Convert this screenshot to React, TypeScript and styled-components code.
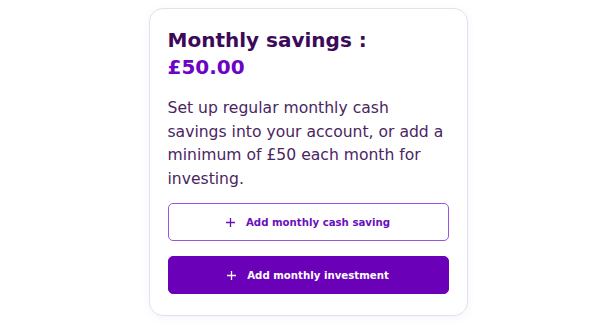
import React from 'react'
import styled, { createGlobalStyle } from 'styled-components'

const GlobalStyle = createGlobalStyle`
  * {
    box-sizing: border-box;
  }

  body {
    margin: 0;
    background: #ffffff;
    font-family: 'DejaVu Sans', Inter, sans-serif;
  }
`

const Page = styled.div`
  display: flex;
  justify-content: center;
  width: 616px;
  height: 326px;
  padding-top: 8px;
`

const Card = styled.section`
  display: flex;
  flex-direction: column;
  width: 319px;
  height: 308px;
  padding: 18px 18px 21px;
  background: #ffffff;
  border: 1px solid #e4e0f0;
  border-radius: 14px;
  box-shadow: 0 2px 10px rgba(60, 20, 110, 0.05);
`

const Title = styled.h2`
  margin: 0;
  font-size: 20px;
  line-height: 27px;
  font-weight: 700;
  color: #3d0a5a;
`

const Amount = styled.span`
  display: block;
  color: #6b04c4;
`

const Text = styled.p`
  margin: 16px 0 0;
  font-size: 15.6px;
  line-height: 23.5px;
  font-weight: 400;
  color: #4a2562;
`

const Actions = styled.div`
  display: flex;
  flex-direction: column;
  gap: 15px;
  margin-top: auto;
`

const Button = styled.button<{ filled?: boolean }>`
  display: flex;
  align-items: center;
  justify-content: center;
  gap: 11px;
  height: 38px;
  width: 100%;
  padding: 0;
  border-radius: 5px;
  border: 1px solid ${(props) => (props.filled ? '#6a00b8' : '#9a55dc')};
  background: ${(props) => (props.filled ? '#6a00b8' : '#ffffff')};
  color: ${(props) => (props.filled ? '#ffffff' : '#6a10bd')};
  font-family: inherit;
  font-size: 10.2px;
  font-weight: 700;
  cursor: pointer;
`

const Plus = () => (
  <svg width="9" height="9" viewBox="0 0 9 9" fill="none">
    <path d="M4.5 0v9M0 4.5h9" stroke="currentColor" strokeWidth="1.3" />
  </svg>
)

function App() {
  return (
    <>
      <GlobalStyle />
      <Page>
        <Card>
          <Title>
            Monthly savings :<Amount>£50.00</Amount>
          </Title>
          <Text>
            Set up regular monthly cash savings into your account, or add a
            minimum of £50 each month for investing.
          </Text>
          <Actions>
            <Button>
              <Plus />
              Add monthly cash saving
            </Button>
            <Button filled>
              <Plus />
              Add monthly investment
            </Button>
          </Actions>
        </Card>
      </Page>
    </>
  )
}

export default App
